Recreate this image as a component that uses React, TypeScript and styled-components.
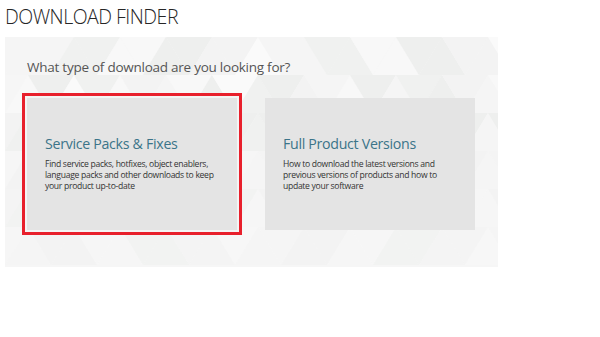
import styled, { createGlobalStyle } from 'styled-components';

const GlobalStyle = createGlobalStyle`
  body {
    margin: 0;
    background: #fff;
    font-family: "Open Sans", "Noto Sans", sans-serif;
  }
`;

// faint triangle mosaic behind the finder panel
const shades = ['#f5f5f5', '#f0f1f0', '#f8f8f8', '#eeefee', '#f3f3f3', '#fafafa'];

function buildPattern() {
  const w = 46;
  const h = 38;
  const rows = 6;
  const cols = 24;
  let polys = '';
  for (let r = 0; r < rows; r++) {
    for (let c = -1; c < cols; c++) {
      const x = c * (w / 2) + (r % 2 ? w / 2 : 0);
      const y = r * h;
      const up = (c + r) % 2 === 0;
      const seed = (r * 31 + c * 17 + ((r * c) % 5)) % 11;
      const fade = r > 2 ? 0.4 : 1;
      const col = shades[seed % shades.length];
      const pts = up
        ? `${x},${y + h} ${x + w / 2},${y} ${x + w},${y + h}`
        : `${x},${y} ${x + w},${y} ${x + w / 2},${y + h}`;
      polys += `<polygon points='${pts}' fill='${col}' fill-opacity='${fade}'/>`;
    }
  }
  const svg = `<svg xmlns='http://www.w3.org/2000/svg' width='493' height='230'><rect width='493' height='230' fill='%23f6f6f6'/>${polys.replace(/#/g, '%23')}</svg>`;
  return `url("data:image/svg+xml;utf8,${svg}")`;
}

const Page = styled.div`
  width: 600px;
  height: 337px;
  overflow: hidden;
`;

const Heading = styled.h1`
  margin: 0;
  padding: 3px 0 0 5px;
  height: 34px;
  font-size: 19.5px;
  font-weight: 300;
  color: #262626;
  letter-spacing: -0.5px;
`;

const Panel = styled.section<{ $bg: string }>`
  margin-left: 5px;
  width: 493px;
  height: 230px;
  box-sizing: border-box;
  padding: 21px 0 0 22px;
  background-color: #f6f6f6;
  background-image: ${(p) => p.$bg};
  background-repeat: no-repeat;
`;

const Question = styled.h2`
  margin: 0;
  font-size: 13.5px;
  font-weight: 400;
  color: #555;
  letter-spacing: -0.25px;
`;

const CardRow = styled.div`
  display: flex;
  gap: 28px;
  margin-top: 22px;
`;

const Card = styled.a<{ $selected?: boolean }>`
  display: block;
  width: 210px;
  height: 132px;
  box-sizing: border-box;
  padding: 36px 10px 0 18px;
  background: #e4e4e4;
  text-decoration: none;
  ${(p) =>
    p.$selected
      ? `box-shadow: 0 0 0 2px #f4f4f4, 0 0 0 5px #e8202c;`
      : ''}
`;

const CardTitle = styled.h3`
  margin: 0 0 6px;
  font-size: 14.2px;
  font-weight: 400;
  color: #3b7489;
  letter-spacing: -0.3px;
`;

const CardText = styled.p`
  margin: 0;
  font-size: 8.6px;
  line-height: 11px;
  color: #333;
  letter-spacing: -0.3px;
`;

const cards = [
  {
    title: 'Service Packs & Fixes',
    text: 'Find service packs, hotfixes, object enablers, language packs and other downloads to keep your product up-to-date',
    selected: true,
  },
  {
    title: 'Full Product Versions',
    text: 'How to download the latest versions and previous versions of products and how to update your software',
  },
];

export default function App() {
  return (
    <Page>
      <GlobalStyle />
      <Heading>DOWNLOAD FINDER</Heading>
      <Panel $bg={buildPattern()}>
        <Question>What type of download are you looking for?</Question>
        <CardRow>
          {cards.map((c) => (
            <Card key={c.title} href="#" $selected={c.selected}>
              <CardTitle>{c.title}</CardTitle>
              <CardText>{c.text}</CardText>
            </Card>
          ))}
        </CardRow>
      </Panel>
    </Page>
  );
}
